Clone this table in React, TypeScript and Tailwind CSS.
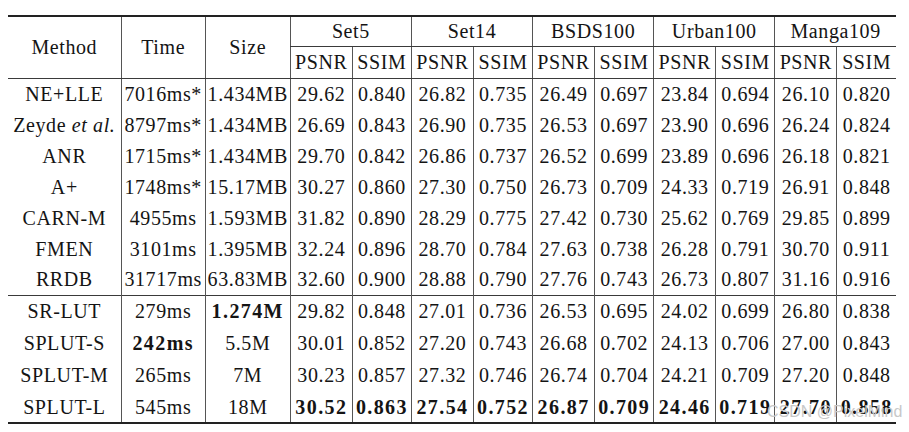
import React from "react";

type Row = {
  method: React.ReactNode;
  time: string;
  size: string;
  vals: string[];
  boldTime?: boolean;
  boldSize?: boolean;
  boldVals?: boolean;
};

const sets = ["Set5", "Set14", "BSDS100", "Urban100", "Manga109"];

const topRows: Row[] = [
  { method: "NE+LLE", time: "7016ms*", size: "1.434MB", vals: ["29.62", "0.840", "26.82", "0.735", "26.49", "0.697", "23.84", "0.694", "26.10", "0.820"] },
  {
    method: (
      <>
        Zeyde <i>et al.</i>
      </>
    ),
    time: "8797ms*",
    size: "1.434MB",
    vals: ["26.69", "0.843", "26.90", "0.735", "26.53", "0.697", "23.90", "0.696", "26.24", "0.824"],
  },
  { method: "ANR", time: "1715ms*", size: "1.434MB", vals: ["29.70", "0.842", "26.86", "0.737", "26.52", "0.699", "23.89", "0.696", "26.18", "0.821"] },
  { method: "A+", time: "1748ms*", size: "15.17MB", vals: ["30.27", "0.860", "27.30", "0.750", "26.73", "0.709", "24.33", "0.719", "26.91", "0.848"] },
  { method: "CARN-M", time: "4955ms", size: "1.593MB", vals: ["31.82", "0.890", "28.29", "0.775", "27.42", "0.730", "25.62", "0.769", "29.85", "0.899"] },
  { method: "FMEN", time: "3101ms", size: "1.395MB", vals: ["32.24", "0.896", "28.70", "0.784", "27.63", "0.738", "26.28", "0.791", "30.70", "0.911"] },
  { method: "RRDB", time: "31717ms", size: "63.83MB", vals: ["32.60", "0.900", "28.88", "0.790", "27.76", "0.743", "26.73", "0.807", "31.16", "0.916"] },
];

const lutRows: Row[] = [
  { method: "SR-LUT", time: "279ms", size: "1.274M", boldSize: true, vals: ["29.82", "0.848", "27.01", "0.736", "26.53", "0.695", "24.02", "0.699", "26.80", "0.838"] },
  { method: "SPLUT-S", time: "242ms", size: "5.5M", boldTime: true, vals: ["30.01", "0.852", "27.20", "0.743", "26.68", "0.702", "24.13", "0.706", "27.00", "0.843"] },
  { method: "SPLUT-M", time: "265ms", size: "7M", vals: ["30.23", "0.857", "27.32", "0.746", "26.74", "0.704", "24.21", "0.709", "27.20", "0.848"] },
  { method: "SPLUT-L", time: "545ms", size: "18M", boldVals: true, vals: ["30.52", "0.863", "27.54", "0.752", "26.87", "0.709", "24.46", "0.719", "27.70", "0.858"] },
];

// bold cells in the paper use a wide bold face, so spread them a bit more
const bold = "font-bold tracking-[1.4px]";

function DataRow({ r, h, first, last }: { r: Row; h: string; first?: boolean; last?: boolean }) {
  const edge = `${first ? "border-t border-t-[#3a3a3a]" : ""} ${last ? "border-b-2 border-b-[#222]" : ""}`;
  return (
    <tr className={h}>
      <td className={`p-0 ${edge}`}>{r.method}</td>
      <td className={`p-0 border-l border-l-[#555] ${edge} ${r.boldTime ? bold : ""}`}>{r.time}</td>
      <td className={`p-0 border-l border-l-[#555] ${edge} ${r.boldSize ? bold : ""}`}>{r.size}</td>
      {r.vals.map((v, i) => (
        <td key={i} className={`p-0 border-l border-l-[#555] ${edge} ${r.boldVals ? bold : ""}`}>
          {v}
        </td>
      ))}
    </tr>
  );
}

export default function App() {
  return (
    <div className="relative w-[909px] h-[432px] bg-white overflow-hidden font-['Liberation_Serif','DejaVu_Serif',serif]">
      <div className="pt-[15px] pl-[8px]">
        <table className="table-fixed border-collapse text-center text-[20px] leading-none tracking-[0.6px] text-[#141414] w-[888px]">
          <colgroup>
            <col className="w-[113px]" />
            <col className="w-[84px]" />
            <col className="w-[85px]" />
            {sets.map((s) => (
              <React.Fragment key={s}>
                <col className="w-[62px]" />
                <col className="w-[59px]" />
              </React.Fragment>
            ))}
          </colgroup>
          <thead>
            <tr className="h-[30px]">
              <th rowSpan={2} className="p-0 font-normal border-t-2 border-t-[#222] border-b border-b-[#3a3a3a]">
                Method
              </th>
              <th rowSpan={2} className="p-0 font-normal border-t-2 border-t-[#222] border-b border-b-[#3a3a3a] border-l border-l-[#555]">
                Time
              </th>
              <th rowSpan={2} className="p-0 font-normal border-t-2 border-t-[#222] border-b border-b-[#3a3a3a] border-l border-l-[#555]">
                Size
              </th>
              {sets.map((s) => (
                <th key={s} colSpan={2} className="p-0 font-normal border-t-2 border-t-[#222] border-b border-b-[#3a3a3a] border-l border-l-[#555]">
                  {s}
                </th>
              ))}
            </tr>
            <tr className="h-[32px]">
              {sets.map((s) => (
                <React.Fragment key={s}>
                  <th className="p-0 font-normal border-b border-b-[#3a3a3a] border-l border-l-[#555]">PSNR</th>
                  <th className="p-0 font-normal border-b border-b-[#3a3a3a] border-l border-l-[#555]">SSIM</th>
                </React.Fragment>
              ))}
            </tr>
          </thead>
          <tbody>
            {topRows.map((r, i) => (
              <DataRow key={i} r={r} h="h-[31px]" />
            ))}
            {lutRows.map((r, i) => (
              <DataRow key={i} r={r} h="h-[32px]" first={i === 0} last={i === lutRows.length - 1} />
            ))}
          </tbody>
        </table>
      </div>
      <div className="absolute left-[767px] top-[404px] text-[16px] leading-none text-[#c8c8c8] font-['Liberation_Sans',Arial,sans-serif]">
        CSDN @PixelMind
      </div>
    </div>
  );
}
